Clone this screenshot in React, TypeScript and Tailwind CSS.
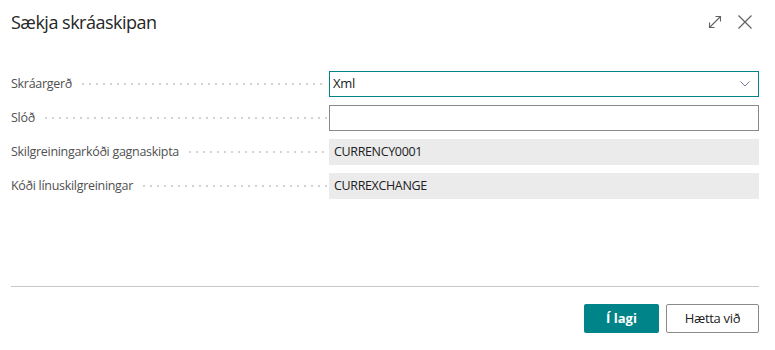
import React from "react";

const rows: { label: string; kind: "select" | "input" | "readonly"; value: string }[] = [
  { label: "Skráargerð", kind: "select", value: "Xml" },
  { label: "Slóð", kind: "input", value: "" },
  { label: "Skilgreiningarkóði gagnaskipta", kind: "readonly", value: "CURRENCY0001" },
  { label: "Kóði línuskilgreiningar", kind: "readonly", value: "CURREXCHANGE" },
];

export default function App() {
  return (
    <div className="w-[775px] h-[350px] bg-white flex flex-col font-['Open_Sans',sans-serif] text-[#212121]">
      <div className="h-[44px] flex items-center pl-[11px] pr-[23px]">
        <div className="flex-1 text-[18px] font-medium tracking-[-0.5px] text-[#262626]">Sækja skráaskipan</div>
        <svg width="14" height="14" viewBox="0 0 14 14" className="mr-[16px]" fill="none" stroke="#616161" strokeWidth="1.1">
          <path d="M1.5 12.5 L12.5 1.5" />
          <path d="M7.5 1.5 H12.5 V6.5" />
          <path d="M1.5 7.5 V12.5 H6.5" />
        </svg>
        <svg width="14" height="14" viewBox="0 0 14 14" fill="none" stroke="#616161" strokeWidth="1.2">
          <path d="M0.5 0.5 L13.5 13.5 M13.5 0.5 L0.5 13.5" />
        </svg>
      </div>
      <div className="flex-1 pt-[27px] pl-[11px] pr-[16px] flex flex-col gap-[8px]">
        {rows.map((r) => (
          <div key={r.label} className="h-[26px] flex items-center">
            <div className="w-[318px] flex items-center pr-[2px]">
              <span className="text-[12.5px] tracking-[-0.3px] text-[#505050] whitespace-nowrap">{r.label}</span>
              <div className="flex-1 ml-[10px] h-[2px] bg-[linear-gradient(to_right,#d2d2d2_2px,transparent_2px)] bg-[length:7px_2px] bg-repeat-x" />
            </div>
            {r.kind === "select" && (
              <div className="flex-1 h-[26px] border border-[#008489] flex items-center pl-[3px] pr-[8px] text-[13px] tracking-[-0.3px]">
                <span className="flex-1">{r.value}</span>
                <svg width="10" height="6" viewBox="0 0 10 6" fill="none" stroke="#7a7a9a" strokeWidth="1">
                  <path d="M0.5 0.5 L5 5 L9.5 0.5" />
                </svg>
              </div>
            )}
            {r.kind === "input" && <div className="flex-1 h-[26px] border border-[#8a8a8a]" />}
            {r.kind === "readonly" && (
              <div className="flex-1 h-[26px] bg-[#ebebec] flex items-center pl-[5px] text-[12.5px] tracking-[-0.35px]">{r.value}</div>
            )}
          </div>
        ))}
      </div>
      <div className="ml-[11px] mr-[16px] border-t border-[#c8c8c8]" />
      <div className="py-[17px] pr-[16px] flex justify-end gap-[7px]">
        <button className="w-[75px] h-[29px] rounded-[2px] bg-[#008489] text-white text-[13px] font-bold">Í lagi</button>
        <button className="w-[93px] h-[29px] rounded-[2px] border border-[#8a8a8a] bg-white text-[#212121] text-[13px] tracking-[-0.3px]">Hætta við</button>
      </div>
    </div>
  );
}
